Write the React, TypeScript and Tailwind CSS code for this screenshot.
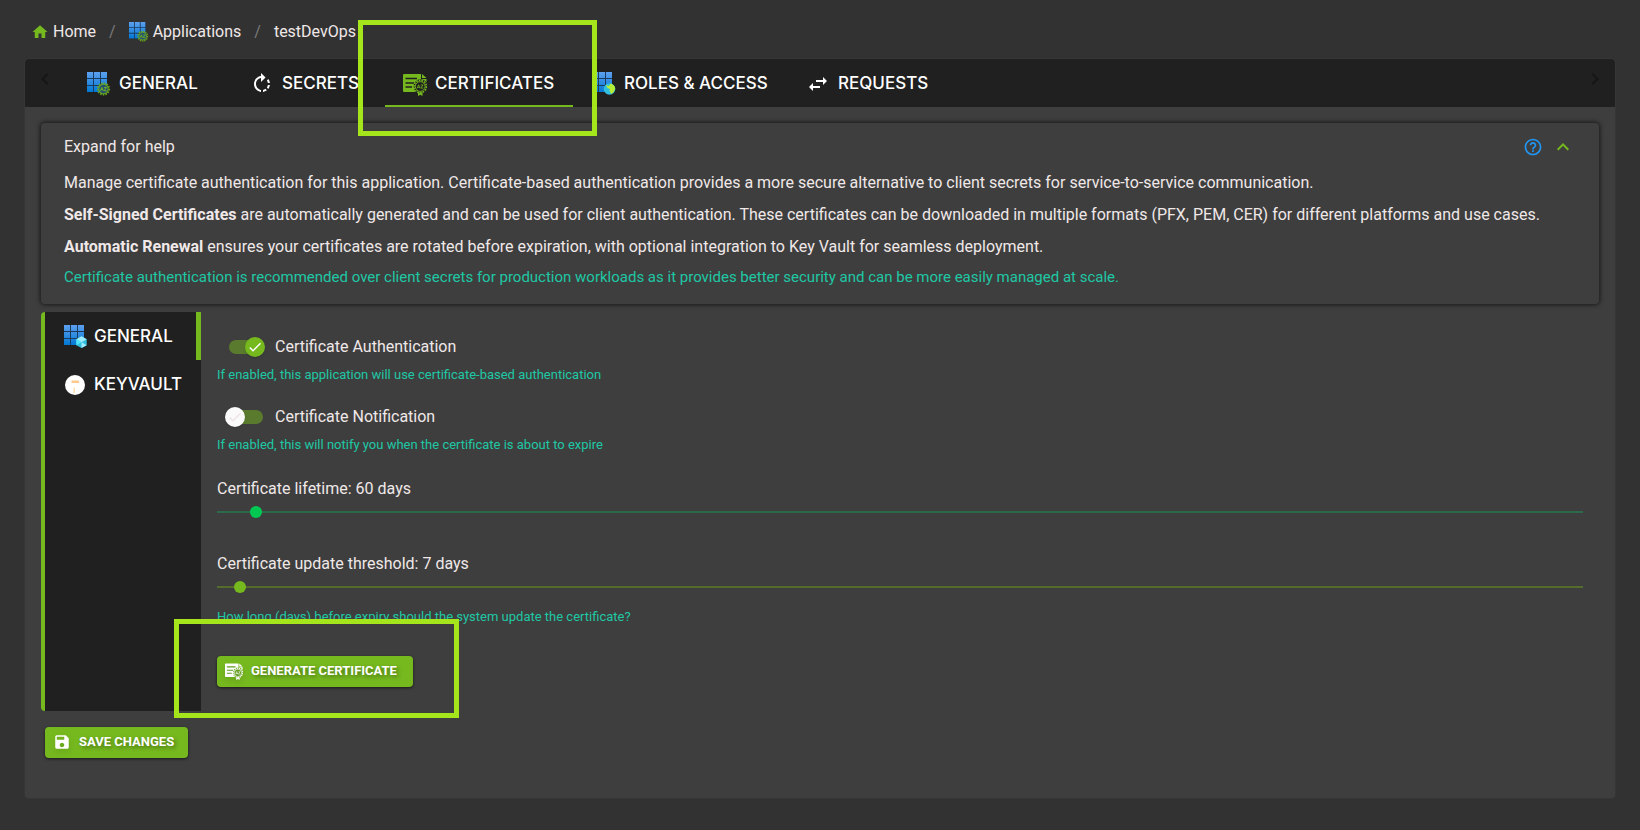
import { useState, type ReactNode } from "react";
import {
  MdCheck,
  MdChevronLeft,
  MdChevronRight,
  MdExpandLess,
  MdHelpOutline,
  MdHome,
  MdRotateRight,
  MdSave,
  MdSwapHoriz,
} from "react-icons/md";

function AppGrid({ id, children }: { id: string; children?: ReactNode }) {
  return (
    <>
      <defs>
        <linearGradient id={id} x1="0" y1="0" x2="0" y2="1">
          <stop offset="0" stopColor="#5ea0ef" />
          <stop offset="1" stopColor="#0078d4" />
        </linearGradient>
        <clipPath id={`${id}-cells`}>
          {[0, 7, 14].map((y) =>
            [0, 7, 14].map((x) => <rect key={`${x}-${y}`} x={x} y={y} width="6" height="6" />),
          )}
        </clipPath>
      </defs>
      <rect width="20" height="20" fill="#1b3a5c" />
      <rect width="20" height="20" fill={`url(#${id})`} clipPath={`url(#${id}-cells)`} />
      {children}
    </>
  );
}

function AppGearIcon({ id, className }: { id: string; className: string }) {
  return (
    <svg viewBox="0 0 24 24" className={className} aria-hidden="true">
      <AppGrid id={id}>
        <circle cx="16.5" cy="17" r="5.8" fill="none" stroke="#6aa51f" strokeWidth="1.6" strokeDasharray="1.6 1.1" />
        <circle cx="16.5" cy="17" r="4.7" fill="#25506e" stroke="#6aa51f" strokeWidth="1.1" />
        <path d="M13.5 18.8l1.4-3.4 1.4 3.4M14 17.7h1.8M17 15.5h2.4L17 18.7h2.5" fill="none" stroke="#76b91f" strokeWidth=".9" />
      </AppGrid>
    </svg>
  );
}

function AppGlobeIcon() {
  return (
    <svg viewBox="0 0 24 24" className="size-6 shrink-0" aria-hidden="true">
      <AppGrid id="app-globe">
        <circle cx="17.5" cy="17" r="5.8" fill="#32bedd" />
        <path d="M14 13l3 1 1.500-2.500c2.500.5 4.500 2.500 4.700 5l-1.500 3.500-2.700 2-1.500-3.500.5-1.500-2.500-1z" fill="#b4ec36" />
      </AppGrid>
    </svg>
  );
}

function AppCubeIcon() {
  return (
    <svg viewBox="0 0 24 24" className="size-6 shrink-0" aria-hidden="true">
      <AppGrid id="app-cube">
        <path d="M17.500 11.300l5.200 2.900v6l-5.200 2.900-5.200-2.900v-6z" fill="#32bedd" />
        <path d="M17.500 11.300l5.200 2.900-5.200 3-5.200-3z" fill="#9cebff" />
        <path d="M12.300 14.200l5.200 3-5.200 3z" fill="#50e6ff" />
        <path d="M17.500 17.200l5.200 3-5.200 2.900z" fill="#9cebff" />
      </AppGrid>
    </svg>
  );
}

function CertificateIcon({ className, seal }: { className: string; seal: string }) {
  return (
    <svg viewBox="0 0 24 24" className={className} fill="currentColor" aria-hidden="true">
      <path d="M1 2h17v5h5.500v3.500A7 7 0 0 0 11.600 18l.6 2H1a1 1 0 0 1-1-1V3a1 1 0 0 1 1-1z" />
      <path d="M19 2l4.500 4H19z" />
      <path d="M2.500 6.500H14M2.500 11H11M2.500 15H9" stroke={seal} strokeWidth="1.400" />
      <circle cx="17.200" cy="14.500" r="6.200" fill={seal} stroke="currentColor" strokeWidth="1.500" strokeDasharray="1.700 1" />
      <circle cx="17.200" cy="14.500" r="4.900" fill="none" stroke="currentColor" strokeWidth=".9" />
      <path d="M14.200 16.300l1.400-3.500 1.400 3.500M14.700 15.300h1.800M17.700 13h2.400l-2.300 3.100h2.500" fill="none" stroke="currentColor" strokeWidth=".8" />
      <path d="M15 20.500h4.500v3.500l-2.200-1.200-2.300 1.200z" />
    </svg>
  );
}

function VaultIcon() {
  return (
    <svg viewBox="0 0 24 24" className="size-6 shrink-0" aria-hidden="true">
      <circle cx="11" cy="12" r="10" fill="#ffffff" />
      <path d="M7.500 7.500h7.500v2.500h-7.500z" fill="#ffca8a" />
      <path d="M9.500 14.500h1.500V20H9.500z" fill="#ffe0a6" />
    </svg>
  );
}

type TabProps = { icon: ReactNode; label: string; className: string; active?: boolean };

function Tab({ icon, label, className, active = false }: TabProps) {
  return (
    <button
      type="button"
      role="tab"
      aria-selected={active}
      className={`flex h-12 shrink-0 items-center gap-2 border-b-2 pt-1 font-[Inter,sans-serif] text-[17px] font-medium whitespace-nowrap text-white ${
        active ? "border-[#76b91f]" : "border-transparent"
      } ${className}`}
    >
      {icon}
      {label}
    </button>
  );
}

function SideTab({ icon, label, active = false }: Omit<TabProps, "className">) {
  return (
    <button
      type="button"
      role="tab"
      aria-selected={active}
      className={`flex h-12 w-full items-center gap-1.5 border-r-[5px] pt-0.5 pl-[19px] font-[Inter,sans-serif] text-[17px] font-medium text-white ${
        active ? "border-[#76b91f]" : "border-transparent"
      }`}
    >
      {icon}
      {label}
    </button>
  );
}

type ToggleProps = { label: string; help: string; checked: boolean; onChange: (next: boolean) => void };

function Toggle({ label, help, checked, onChange }: ToggleProps) {
  return (
    <div className="h-[70px]">
      <label className="flex h-[38px] cursor-pointer items-center gap-3 pl-3">
        <input
          type="checkbox"
          role="switch"
          className="sr-only"
          checked={checked}
          onChange={(event) => onChange(event.target.checked)}
        />
        <span className="flex h-3.5 w-[34px] items-center rounded-full bg-[#5a7b2d]">
          <span
            className={`flex size-5 shrink-0 items-center justify-center rounded-full shadow ${
              checked ? "ml-4 bg-[#76b91f] text-white" : "-ml-1 bg-[#fafafa] text-[#eee4e4]"
            }`}
          >
            <MdCheck className="size-4" />
          </span>
        </span>
        <span>{label}</span>
      </label>
      <p className="text-[13px] leading-[18px] text-[#1ec8a5]">{help}</p>
    </div>
  );
}

type SliderProps = {
  id: string;
  label: string;
  min: number;
  max: number;
  value: number;
  onChange: (next: number) => void;
  className: string;
};

function Slider({ id, label, min, max, value, onChange, className }: SliderProps) {
  return (
    <div>
      <label htmlFor={id} className="block leading-7">
        {label}: {value} days
      </label>
      <input
        id={id}
        type="range"
        min={min}
        max={max}
        value={value}
        onChange={(event) => onChange(Number(event.target.value))}
        className={`block h-[18px] w-full cursor-pointer appearance-none bg-transparent [&::-webkit-slider-runnable-track]:h-0.5 [&::-webkit-slider-thumb]:-mt-[5px] [&::-webkit-slider-thumb]:size-3 [&::-webkit-slider-thumb]:appearance-none [&::-webkit-slider-thumb]:rounded-full ${className}`}
      />
    </div>
  );
}

const actionButton =
  "flex h-[31px] items-center rounded bg-[#76b91f] pb-0.5 pl-2 text-[13px] font-bold text-white shadow-[0_1px_3px_rgba(0,0,0,0.6)] text-shadow-[2px_2px_4px_rgba(0,0,0,0.4)]";

export default function App() {
  const [authEnabled, setAuthEnabled] = useState(true);
  const [notify, setNotify] = useState(false);
  const [lifetime, setLifetime] = useState(60);
  const [threshold, setThreshold] = useState(7);

  return (
    <div className="min-h-screen bg-[#323232] px-[25px] pb-8 font-[Roboto,sans-serif] text-base text-[#f0e8e8]">
      <nav aria-label="Breadcrumb" className="flex h-[59px] items-center gap-[13px] pt-1 pl-1.5">
        <a href="#home" className="flex items-center gap-1">
          <MdHome className="size-[18px] text-[#76b91f]" />
          Home
        </a>
        <span className="text-[#7a7a7a]">/</span>
        <a href="#applications" className="flex items-center gap-1">
          <AppGearIcon id="crumb-grid" className="size-5" />
          Applications
        </a>
        <span className="text-[#7a7a7a]">/</span>
        <a href="#test">testDevOps</a>
      </nav>

      <main className="rounded bg-[#3e3e3e] pb-10 shadow-[0_0_2px_#444]">
        <div className="flex h-12 items-center rounded-t bg-[#202020]">
          <button type="button" aria-label="Scroll left" className="flex w-10 justify-center pb-2">
            <MdChevronLeft className="size-6 text-[#161616]" />
          </button>
          <div role="tablist" className="flex flex-1">
            <Tab className="w-40 pl-[22px]" icon={<AppGearIcon id="tab-grid" className="size-6 shrink-0" />} label="GENERAL" />
            <Tab className="w-40 pl-[25px]" icon={<MdRotateRight className="size-6" />} label="SECRETS" />
            <div className="relative">
              <Tab
                className="w-[188px] pl-[18px]"
                icon={<CertificateIcon className="size-6 shrink-0 text-[#76b91f]" seal="#202020" />}
                label="CERTIFICATES"
                active
              />
              <div className="pointer-events-none absolute -top-[39px] -left-[27px] z-10 h-[116px] w-[239px] border-5 border-[#a4e61b]" />
            </div>
            <Tab className="w-[215px] pl-[19px]" icon={<AppGlobeIcon />} label="ROLES &amp; ACCESS" />
            <Tab className="w-40 pl-[18px]" icon={<MdSwapHoriz className="size-6" />} label="REQUESTS" />
          </div>
          <button type="button" aria-label="Scroll right" className="flex w-10 justify-center pb-2">
            <MdChevronRight className="size-6 text-[#161616]" />
          </button>
        </div>

        <div className="px-4 pt-4">
          <section className="rounded pr-6 pb-[15px] pl-[23px] shadow-[0_0_4px_1px_rgba(0,0,0,0.6)]">
            <div className="flex h-12 items-center">
              <h2 className="flex-1">Expand for help</h2>
              <MdHelpOutline className="mr-2 size-5 text-[#2196f3]" />
              <button type="button" aria-label="Collapse help" aria-expanded="true">
                <MdExpandLess className="size-6 text-[#76b91f]" />
              </button>
            </div>
            <p className="leading-6">
              Manage certificate authentication for this application. Certificate-based authentication provides a more
              secure alternative to client secrets for service-to-service communication.
            </p>
            <p className="mt-2 leading-6">
              <strong>Self-Signed Certificates</strong> are automatically generated and can be used for client
              authentication. These certificates can be downloaded in multiple formats (PFX, PEM, CER) for different
              platforms and use cases.
            </p>
            <p className="mt-2 leading-6">
              <strong>Automatic Renewal</strong> ensures your certificates are rotated before expiration, with optional
              integration to Key Vault for seamless deployment.
            </p>
            <p className="mt-1.5 text-[15px] leading-6 text-[#1ec8a5]">
              Certificate authentication is recommended over client secrets for production workloads as it provides
              better security and can be more easily managed at scale.
            </p>
          </section>

          <div className="mt-2 flex">
            <div role="tablist" aria-orientation="vertical" className="w-40 rounded-l border-l-4 border-[#76b91f] bg-[#202020]">
              <SideTab icon={<AppCubeIcon />} label="GENERAL" active />
              <SideTab icon={<VaultIcon />} label="KEYVAULT" />
            </div>
            <div className="flex-1 px-4 pt-4 pb-6">
              <Toggle
                label="Certificate Authentication"
                help="If enabled, this application will use certificate-based authentication"
                checked={authEnabled}
                onChange={setAuthEnabled}
              />
              <Toggle
                label="Certificate Notification"
                help="If enabled, this will notify you when the certificate is about to expire"
                checked={notify}
                onChange={setNotify}
              />
              <div className="grid gap-[29px] pt-[7px]">
                <Slider
                  id="lifetime"
                  label="Certificate lifetime"
                  min={30}
                  max={1260}
                  value={lifetime}
                  onChange={setLifetime}
                  className="[&::-webkit-slider-runnable-track]:bg-[#2b6b49] [&::-webkit-slider-thumb]:bg-[#00c853]"
                />
                <Slider
                  id="threshold"
                  label="Certificate update threshold"
                  min={1}
                  max={480}
                  value={threshold}
                  onChange={setThreshold}
                  className="[&::-webkit-slider-runnable-track]:bg-[#556b2c] [&::-webkit-slider-thumb]:bg-[#76b91f]"
                />
              </div>
              <p className="mt-3 text-[13px] leading-[18px] text-[#1ec8a5]">
                How long (days) before expiry should the system update the certificate?
              </p>
              <div className="relative mt-[30px] w-fit">
                <button type="button" className={`${actionButton} w-[196px] gap-2`}>
                  <CertificateIcon className="size-[18px] shrink-0 drop-shadow-md" seal="#5f9a18" />
                  GENERATE CERTIFICATE
                </button>
                <div className="pointer-events-none absolute -top-[37px] -left-[43px] z-10 h-[99px] w-[285px] border-5 border-[#a4e61b]" />
              </div>
            </div>
          </div>

          <button type="button" className={`${actionButton} mt-4 ml-1 w-[143px] gap-2`}>
            <MdSave className="size-[18px] drop-shadow-md" />
            SAVE CHANGES
          </button>
        </div>
      </main>
    </div>
  );
}
